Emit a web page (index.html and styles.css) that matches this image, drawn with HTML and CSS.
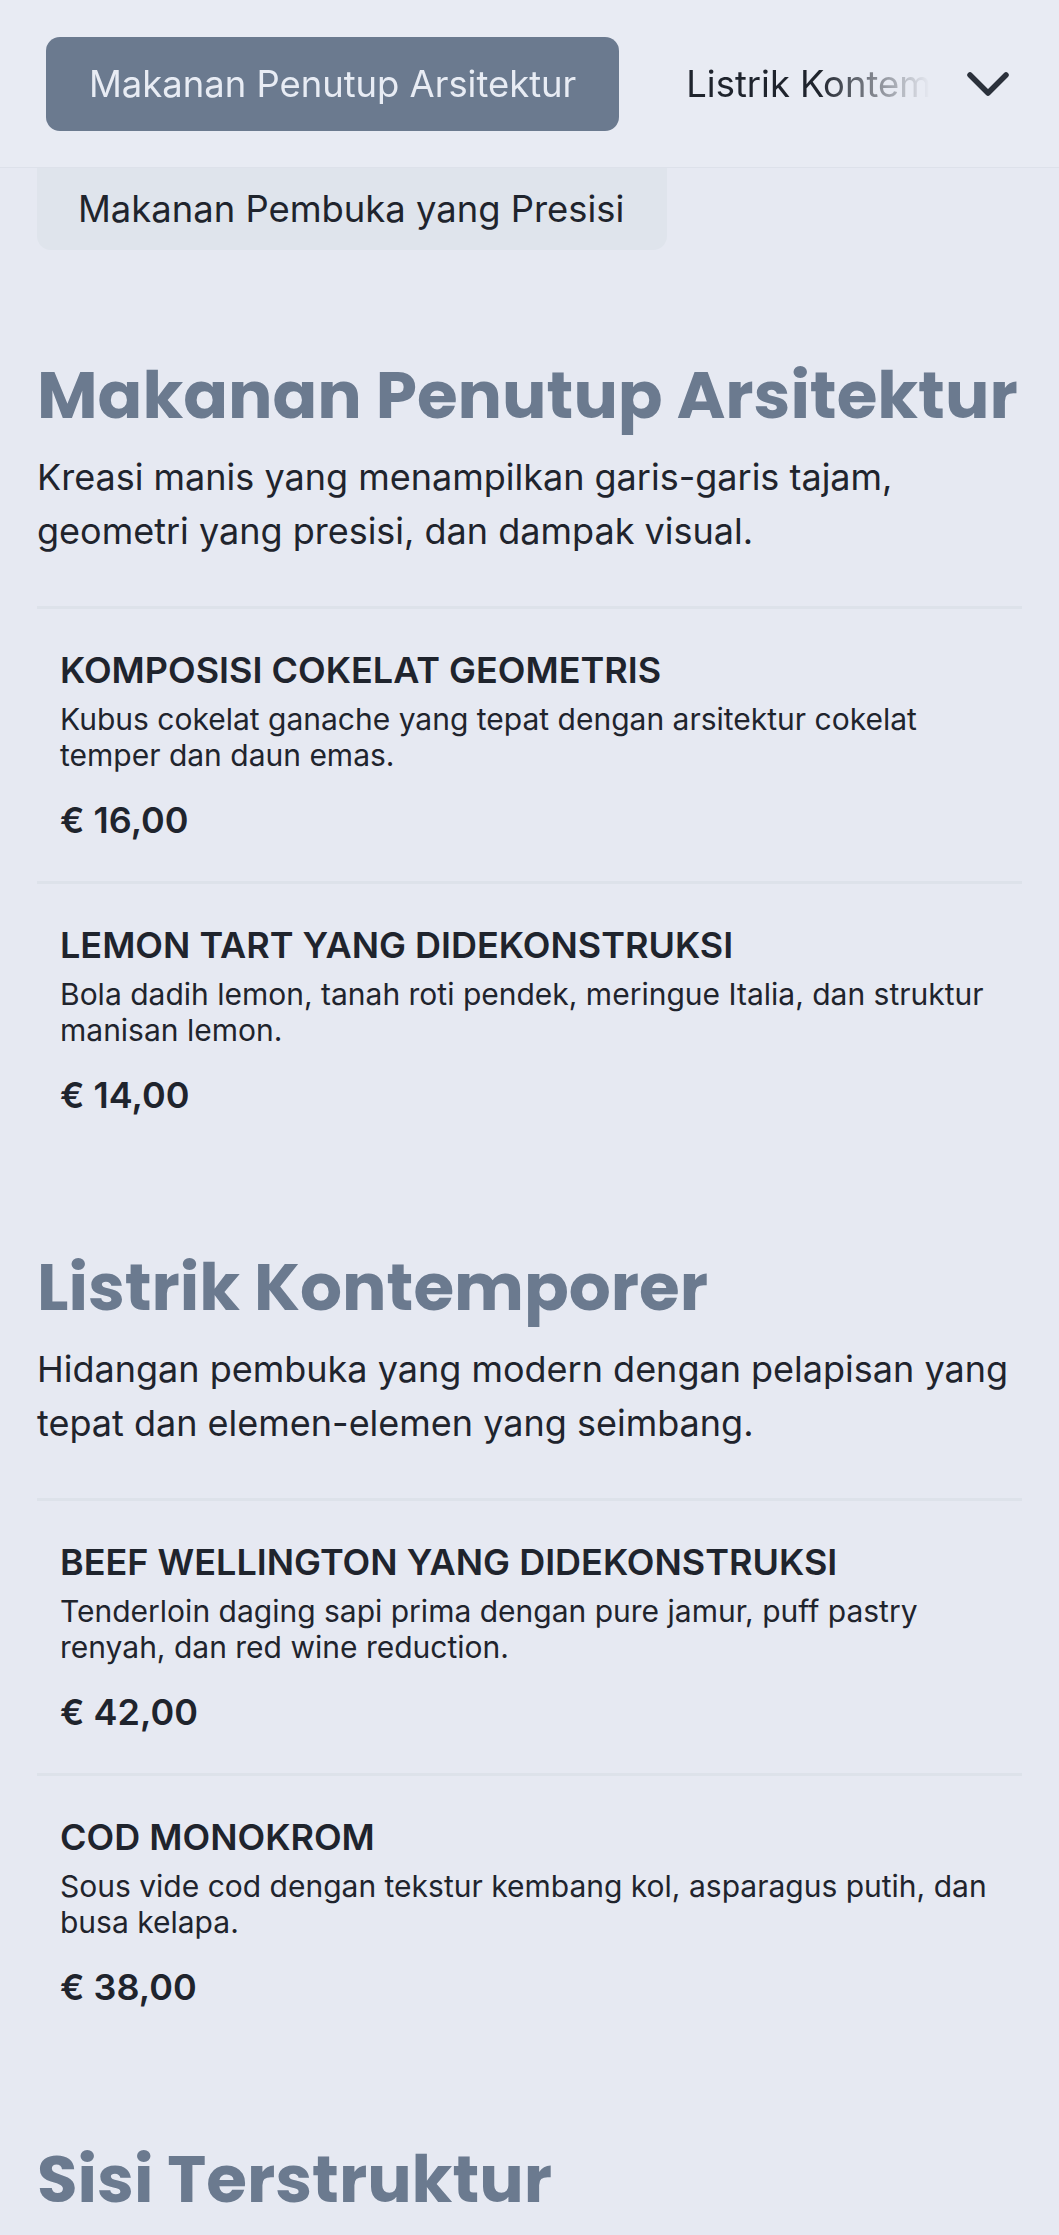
FILE: index.html
```html
<!DOCTYPE html>
<html lang="id">
<head>
    <meta charset="UTF-8">
    <meta name="viewport" content="width=device-width, initial-scale=1.0">
    <title>Menu</title>

    <link rel="stylesheet" href="styles.css">
</head>
<body>
    <!-- Category tabs -->
    <header class="topbar">
        <nav class="tabs">
            <a class="tab active" href="#penutup">Makanan Penutup Arsitektur</a>
            <a class="tab" href="#listrik">Listrik Kontemporer</a>
            <a class="tab" href="#sisi">Sisi Terstruktur</a>
        </nav>
        <button class="toggle" aria-label="Semua kategori">
            <svg width="44" height="30" viewBox="0 0 44 30" fill="none">
                <path d="M4 6 L22 24 L40 6" stroke="#2b313b" stroke-width="5.5" stroke-linecap="round" stroke-linejoin="round"/>
            </svg>
        </button>
    </header>

    <div class="dropdown">
        <a class="drop-item" href="#pembuka">Makanan Pembuka yang Presisi</a>
    </div>

    <main class="menu">
        <section class="category first" id="penutup">
            <h2>Makanan Penutup Arsitektur</h2>
            <p class="lead">Kreasi manis yang menampilkan garis-garis tajam, geometri yang presisi, dan dampak visual.</p>

            <div class="item">
                <h3>Komposisi Cokelat Geometris</h3>
                <p class="desc">Kubus cokelat ganache yang tepat dengan arsitektur cokelat temper dan daun emas.</p>
                <div class="price">€ 16,00</div>
            </div>
            <div class="item">
                <h3>Lemon Tart yang Didekonstruksi</h3>
                <p class="desc">Bola dadih lemon, tanah roti pendek, meringue Italia, dan struktur manisan lemon.</p>
                <div class="price">€ 14,00</div>
            </div>
        </section>

        <section class="category" id="listrik">
            <h2>Listrik Kontemporer</h2>
            <p class="lead">Hidangan pembuka yang modern dengan pelapisan yang tepat dan elemen-elemen yang seimbang.</p>

            <div class="item">
                <h3>Beef Wellington yang Didekonstruksi</h3>
                <p class="desc">Tenderloin daging sapi prima dengan pure jamur, puff pastry renyah, dan red wine reduction.</p>
                <div class="price">€ 42,00</div>
            </div>
            <div class="item">
                <h3>Cod Monokrom</h3>
                <p class="desc">Sous vide cod dengan tekstur kembang kol, asparagus putih, dan busa kelapa.</p>
                <div class="price">€ 38,00</div>
            </div>
        </section>

        <section class="category" id="sisi">
            <h2>Sisi Terstruktur</h2>
        </section>
    </main>
</body>
</html>
```

FILE: styles.css
```css
body {
    margin: 0;
    font-family: Inter, "Noto Sans", sans-serif;
    background: #e6e9f2;
    color: #1f242d;
    height: 2235px;
    overflow: hidden;
}

.topbar {
    display: flex;
    align-items: center;
    height: 168px;
    box-sizing: border-box;
    padding: 0 31px 0 46px;
    background: #e8ebf3;
    border-bottom: 1px solid #dde1ea;
}

.tabs {
    flex-grow: 1;
    display: flex;
    gap: 24px;
    overflow: hidden;
    white-space: nowrap;
    -webkit-mask-image: linear-gradient(to right, #000 calc(100% - 115px), transparent calc(100% - 4px));
    mask-image: linear-gradient(to right, #000 calc(100% - 115px), transparent calc(100% - 4px));
}

.tab {
    flex-shrink: 0;
    padding: 20px 43px;
    font-size: 36.4px;
    line-height: 54px;
    color: #1f242d;
    text-decoration: none;
    border-radius: 14px;
}

.tab.active {
    background: #6b7a8f;
    color: #e8ecf4;
}

.toggle {
    flex-shrink: 0;
    width: 80px;
    height: 80px;
    margin-left: 14px;
    display: flex;
    align-items: center;
    justify-content: center;
    background: none;
    border: none;
    padding: 0;
}

.dropdown {
    padding: 0 37px;
}

.drop-item {
    display: inline-block;
    padding: 14px 43px 14px 41px;
    font-size: 36.4px;
    line-height: 54px;
    color: #1f242d;
    text-decoration: none;
    background: #dfe4ec;
    border-radius: 0 0 14px 14px;
}

.menu {
    padding: 0 37px;
}

.category {
    padding-top: 92px;
}

.category.first {
    padding-top: 106px;
}

.category h2 {
    margin: 0;
    font-family: Poppins, "Open Sans", sans-serif;
    font-weight: 700;
    font-size: 66px;
    line-height: 78px;
    color: #6b7a8f;
}

.lead {
    margin: 16px 0 48px 0;
    font-size: 36px;
    line-height: 54px;
    color: #1f242d;
}

.item {
    padding: 36px 23px 34px 23px;
    border-top: 3px solid #dde2ea;
}

.item h3 {
    margin: 0;
    font-size: 36px;
    line-height: 50px;
    font-weight: 600;
    text-transform: uppercase;
    color: #1f242d;
}

.desc {
    margin: 6px 0 0 0;
    font-size: 30px;
    line-height: 36px;
    color: #1f242d;
}

.price {
    margin-top: 20px;
    font-size: 36px;
    line-height: 54px;
    font-weight: 600;
    color: #1f242d;
}
```
